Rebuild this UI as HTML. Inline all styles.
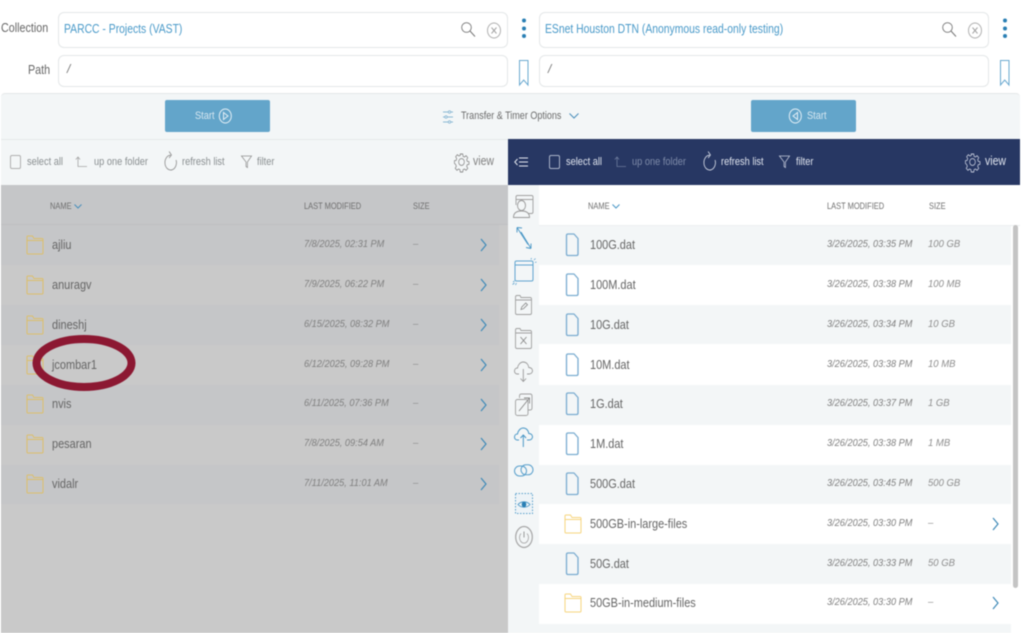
<!DOCTYPE html>
<html><head><meta charset="utf-8">
<style>
html,body{margin:0;padding:0;width:1024px;height:633px;overflow:hidden;background:#fff;font-family:"Liberation Sans","DejaVu Sans",sans-serif;}
#p{position:relative;width:1024px;height:633px;overflow:hidden;filter:blur(.45px);}
.a{position:absolute;white-space:nowrap;line-height:14px;transform-origin:0 0;}
.box{position:absolute;box-sizing:border-box;background:#fff;border:1px solid #e4e7e8;border-radius:6px;}
.lab{color:#666;font-size:12.5px;transform:scaleX(.86);}
.blue{color:#4a9ac9;font-size:12.5px;transform:scaleX(.83);}
.bar{color:#8a8f91;font-size:11px;transform:scaleX(.84);}
.w{color:#dfe4ee;font-size:11px;transform:scaleX(.84);}
.dim{color:#7d8aa8;font-size:11px;transform:scaleX(.84);}
.r{position:absolute;height:40px;}
.n{color:#666;font-size:12.5px;transform:scaleX(.875);}
.d{color:#808080;font-size:10px;font-style:italic;transform:scaleX(.92);}
.s{color:#8e8e8e;font-size:10px;font-style:italic;transform:scaleX(.95);}
.h{color:#6f6f6f;font-size:9px;transform:scaleX(.83);}
.v{font-size:12.5px;transform:scaleX(.84);}
svg{position:absolute;overflow:visible;fill:none;}
.btn{position:absolute;top:100px;width:105px;height:32px;background:#63a5ca;border-radius:2px;}
.st{color:#d5e6f0;font-size:11px;transform:scaleX(.84);}
</style></head><body><div id="p">
<svg width="0" height="0" style="position:absolute">
<defs>
<symbol id="fo" viewBox="0 0 18 20" preserveAspectRatio="none" overflow="visible"><path d="M1 4V2q0-1 1-1h4.500l1.500 2.500h8q1 0 1 1V18q0 1-1 1H2q-1 0-1-1zM1 5.500h16" stroke="currentColor" stroke-width="1" fill="none"/></symbol>
<symbol id="fi" viewBox="0 0 14 24" preserveAspectRatio="none" overflow="visible"><path d="M3 1H9l4 4.500V21q0 1.500-1.500 1.500H3Q1.500 22.500 1.500 21V2.500Q1.500 1 3 1z" stroke="#7aacd0" stroke-width="1.300" stroke-linejoin="round" fill="none"/></symbol>
<symbol id="ch" viewBox="0 0 7 14" preserveAspectRatio="none" overflow="visible"><path d="M1 1l5 6-5 6" stroke="#3f8ab8" stroke-width="1.200" fill="none"/></symbol>
<symbol id="gear" viewBox="0 0 18 18" preserveAspectRatio="none" overflow="visible"><circle cx="9" cy="9" r="3.400" stroke="currentColor" fill="none" stroke-width=".9"/><path d="M7.500 1h3l.4 2.300 1.600.7 2-1.300 2 2-1.300 2 .7 1.600 2.100.4v2.600l-2.100.4-.7 1.600 1.300 2-2 2-2-1.300-1.600.7-.4 2.300h-3l-.4-2.300-1.600-.7-2 1.300-2-2 1.300-2-.7-1.600L.5 10.300V7.700l2.100-.4.7-1.600-1.300-2 2-2 2 1.300 1.600-.7z" stroke="currentColor" stroke-width=".9" fill="none"/></symbol>
<symbol id="ref" viewBox="0 0 14 20" preserveAspectRatio="none" overflow="visible"><path d="M7 4.200A6.200 7.400 0 1 0 13 9" stroke="currentColor" stroke-width=".9" fill="none"/><path d="M5.500 .5L8 4 5.500 7" stroke="currentColor" stroke-width=".9" fill="none"/></symbol>
<symbol id="fil" viewBox="0 0 12 13" preserveAspectRatio="none" overflow="visible"><path d="M.5 1h11L7 7v5.500L5.500 11.500V7z" stroke="currentColor" stroke-width=".8" fill="none"/></symbol>
<symbol id="up" viewBox="0 0 12 12" preserveAspectRatio="none" overflow="visible"><path d="M.8 3.500L3 1l2 2.500M3 1v9.500h9" stroke="currentColor" stroke-width=".8" fill="none"/></symbol>
</defs></svg>

<!-- top labels -->
<div class="a lab" style="left:1px;top:21px;">Collection</div>
<div class="a lab" style="left:28px;top:63px;">Path</div>
<div class="box" style="left:58px;top:12px;width:450px;height:36px;"></div>
<div class="box" style="left:58px;top:55px;width:450px;height:32px;"></div>
<div class="box" style="left:539px;top:12px;width:450px;height:36px;"></div>
<div class="box" style="left:539px;top:55px;width:450px;height:32px;"></div>
<div class="a blue" style="left:64px;top:22px;">PARCC - Projects (VAST)</div>
<div class="a blue" style="left:545px;top:22px;">ESnet Houston DTN (Anonymous read-only testing)</div>
<div class="a" style="left:67px;top:62px;color:#777;font-size:12px;font-style:italic;">/</div>
<div class="a" style="left:548px;top:62px;color:#777;font-size:12px;font-style:italic;">/</div>
<!-- search/clear -->
<svg style="left:461px;top:22px" width="14" height="15"><circle cx="5.500" cy="5.500" r="4.800" stroke="#777" stroke-width=".9"/><path d="M9 9l5 5.500" stroke="#777" stroke-width="1"/></svg>
<svg style="left:942px;top:22px" width="14" height="15"><circle cx="5.500" cy="5.500" r="4.800" stroke="#777" stroke-width=".9"/><path d="M9 9l5 5.500" stroke="#777" stroke-width="1"/></svg>
<svg style="left:487px;top:22px" width="15" height="18"><ellipse cx="7" cy="8.500" rx="6.500" ry="7.500" stroke="#b0b0b0"/><path d="M4.500 5.500l5 6m0-6l-5 6" stroke="#a5a5a5"/></svg>
<svg style="left:968px;top:22px" width="15" height="18"><ellipse cx="7" cy="8.500" rx="6.500" ry="7.500" stroke="#b0b0b0"/><path d="M4.500 5.500l5 6m0-6l-5 6" stroke="#a5a5a5"/></svg>
<!-- kebabs -->
<svg style="left:521px;top:18px" width="6" height="21"><g fill="#2a7fb4"><circle cx="3" cy="2.500" r="2"/><circle cx="3" cy="10.500" r="2"/><circle cx="3" cy="18" r="2"/></g></svg>
<svg style="left:1002px;top:18px" width="6" height="21"><g fill="#2a7fb4"><circle cx="3" cy="2.500" r="2"/><circle cx="3" cy="10.500" r="2"/><circle cx="3" cy="18" r="2"/></g></svg>
<!-- bookmarks -->
<svg style="left:519px;top:60px" width="10" height="26"><path d="M.5.500h8.500V25L4.700 20 .5 25z" stroke="#6aa9d0" stroke-width="1"/></svg>
<svg style="left:1000px;top:60px" width="10" height="26"><path d="M.5.500h8.500V25L4.700 20 .5 25z" stroke="#6aa9d0" stroke-width="1"/></svg>

<!-- transfer bar -->
<div style="position:absolute;left:1px;top:93px;width:1019px;height:46px;background:#f3f6f7;border-top:1px solid #e4e7e8;border-radius:4px 4px 0 0;"></div>
<div class="btn" style="left:165px;"></div>
<div class="btn" style="left:751px;"></div>
<div class="a st" style="left:195px;top:109px;">Start</div>
<svg style="left:219px;top:108px" width="13" height="16"><ellipse cx="6.300" cy="8" rx="6" ry="7" stroke="#e4eff6"/><path d="M4.500 4.500v7l4.500-3.500z" stroke="#e4eff6"/></svg>
<div class="a st" style="left:807px;top:109px;">Start</div>
<svg style="left:789px;top:108px" width="13" height="16"><ellipse cx="6.300" cy="8" rx="6" ry="7" stroke="#e4eff6"/><path d="M8.500 4.500v7L4 8z" stroke="#e4eff6"/></svg>
<svg style="left:443px;top:110px" width="10" height="14"><path d="M0 2h10M0 7h10M0 12h10" stroke="#8ab8d4" stroke-width=".9"/><circle cx="6.500" cy="2" r="1.200" fill="#f3f6f7" stroke="#8ab8d4" stroke-width=".8"/><circle cx="3" cy="7" r="1.200" fill="#f3f6f7" stroke="#8ab8d4" stroke-width=".8"/><circle cx="6.500" cy="12" r="1.200" fill="#f3f6f7" stroke="#8ab8d4" stroke-width=".8"/></svg>
<div class="a" style="left:461px;top:108.500px;color:#6c6c6c;font-size:11px;transform:scaleX(.82);">Transfer &amp; Timer Options</div>
<svg style="left:569px;top:113px" width="10" height="6"><path d="M.5.500L5 5l4.500-4.500" stroke="#4a8fbb" stroke-width="1"/></svg>

<!-- left toolbar -->
<div style="position:absolute;left:1px;top:139px;width:507px;height:46px;background:#f3f6f7;border-top:1px solid #e6e9ea;box-sizing:border-box;"></div>
<div style="position:absolute;left:10px;top:155px;width:11px;height:14px;box-sizing:border-box;border:1px solid #b0b0b0;border-radius:2px;"></div>
<div class="a bar" style="left:27px;top:155px;">select all</div>
<svg style="left:75px;top:156px;color:#a5a5a5" width="12" height="12"><use href="#up" width="12" height="12"/></svg>
<div class="a bar" style="left:94px;top:155px;">up one folder</div>
<svg style="left:164px;top:151px;color:#909090" width="13" height="20"><use href="#ref" width="13" height="20"/></svg>
<div class="a bar" style="left:182px;top:155px;">refresh list</div>
<svg style="left:241px;top:155px;color:#909090" width="11" height="13"><use href="#fil" width="11" height="13"/></svg>
<div class="a bar" style="left:257px;top:155px;">filter</div>
<svg style="left:454px;top:153px;color:#8a8a8a" width="15" height="18"><use href="#gear" width="15" height="18"/></svg>
<div class="a v" style="left:473px;top:154px;color:#808080;">view</div>

<!-- right toolbar -->
<div style="position:absolute;left:508px;top:139px;width:512px;height:46px;background:#273763;"></div>
<svg style="left:514px;top:157px" width="15" height="10"><path d="M3.500 2L.8 5l2.700 3" stroke="#e4e8f0" stroke-width="1"/><path d="M5 1h9M5 5h9M5 9h9" stroke="#e4e8f0" stroke-width="1.100"/></svg>
<div style="position:absolute;left:549px;top:155px;width:11px;height:14px;box-sizing:border-box;border:1px solid #aab3c8;border-radius:2px;"></div>
<div class="a w" style="left:566px;top:155px;">select all</div>
<svg style="left:614px;top:156px;color:#6c7a9c" width="12" height="12"><use href="#up" width="12" height="12"/></svg>
<div class="a dim" style="left:632px;top:155px;">up one folder</div>
<svg style="left:703px;top:151px;color:#d5dae6" width="13" height="20"><use href="#ref" width="13" height="20"/></svg>
<div class="a w" style="left:721px;top:155px;">refresh list</div>
<svg style="left:779px;top:155px;color:#c5cbdc" width="11" height="13"><use href="#fil" width="11" height="13"/></svg>
<div class="a w" style="left:796px;top:155px;">filter</div>
<svg style="left:965px;top:153px;color:#c5cbdc" width="15" height="18"><use href="#gear" width="15" height="18"/></svg>
<div class="a v" style="left:985px;top:154px;color:#dfe4ee;">view</div>

<!-- left pane -->
<div style="position:absolute;left:1px;top:185px;width:507px;height:448px;background:#c9c9c9;"></div>
<div style="position:absolute;left:1px;top:185px;width:507px;height:40px;background:#c5c6c8;border-bottom:1px solid #bfc0c2;box-sizing:border-box;"></div>
<div class="a h" style="left:50px;top:199px;">NAME</div>
<svg style="left:74px;top:204px" width="8" height="5"><path d="M.5.500L4 4 7.500.500" stroke="#4a8fbb"/></svg>
<div class="a h" style="left:304px;top:199px;">LAST MODIFIED</div>
<div class="a h" style="left:413px;top:199px;">SIZE</div>

<div class="r" style="left:1px;top:225px;width:498px;background:#c5c6c8;"></div>
<div class="r" style="left:1px;top:305px;width:498px;background:#c5c6c8;"></div>
<div class="r" style="left:1px;top:385px;width:498px;background:#c5c6c8;"></div>
<div class="r" style="left:1px;top:465px;width:498px;background:#c5c6c8;height:39px;"></div>

<svg style="left:26px;top:235px;color:#dcbf6c" width="18" height="20"><use href="#fo" width="18" height="20"/></svg>
<div class="a n" style="left:52px;top:238px;">ajliu</div><div class="a d" style="left:304px;top:238px;">7/8/2025, 02:31 PM</div><div class="a s" style="left:413px;top:238px;">–</div>
<svg style="left:480px;top:238px" width="7" height="14"><use href="#ch" width="7" height="14"/></svg>

<svg style="left:26px;top:275px;color:#dcbf6c" width="18" height="20"><use href="#fo" width="18" height="20"/></svg>
<div class="a n" style="left:52px;top:278px;">anuragv</div><div class="a d" style="left:304px;top:278px;">7/9/2025, 06:22 PM</div><div class="a s" style="left:413px;top:278px;">–</div>
<svg style="left:480px;top:278px" width="7" height="14"><use href="#ch" width="7" height="14"/></svg>

<svg style="left:26px;top:315px;color:#dcbf6c" width="18" height="20"><use href="#fo" width="18" height="20"/></svg>
<div class="a n" style="left:52px;top:318px;">dineshj</div><div class="a d" style="left:304px;top:318px;">6/15/2025, 08:32 PM</div><div class="a s" style="left:413px;top:318px;">–</div>
<svg style="left:480px;top:318px" width="7" height="14"><use href="#ch" width="7" height="14"/></svg>

<svg style="left:26px;top:355px;color:#dcbf6c" width="18" height="20"><use href="#fo" width="18" height="20"/></svg>
<div class="a n" style="left:52px;top:358px;">jcombar1</div><div class="a d" style="left:304px;top:358px;">6/12/2025, 09:28 PM</div><div class="a s" style="left:413px;top:358px;">–</div>
<svg style="left:480px;top:358px" width="7" height="14"><use href="#ch" width="7" height="14"/></svg>

<svg style="left:26px;top:394px;color:#dcbf6c" width="18" height="20"><use href="#fo" width="18" height="20"/></svg>
<div class="a n" style="left:52px;top:397px;">nvis</div><div class="a d" style="left:304px;top:397px;">6/11/2025, 07:36 PM</div><div class="a s" style="left:413px;top:397px;">–</div>
<svg style="left:480px;top:398px" width="7" height="14"><use href="#ch" width="7" height="14"/></svg>

<svg style="left:26px;top:434px;color:#dcbf6c" width="18" height="20"><use href="#fo" width="18" height="20"/></svg>
<div class="a n" style="left:52px;top:437px;">pesaran</div><div class="a d" style="left:304px;top:437px;">7/8/2025, 09:54 AM</div><div class="a s" style="left:413px;top:437px;">–</div>
<svg style="left:480px;top:437px" width="7" height="14"><use href="#ch" width="7" height="14"/></svg>

<svg style="left:26px;top:474px;color:#dcbf6c" width="18" height="20"><use href="#fo" width="18" height="20"/></svg>
<div class="a n" style="left:52px;top:477px;">vidalr</div><div class="a d" style="left:304px;top:477px;">7/11/2025, 11:01 AM</div><div class="a s" style="left:413px;top:477px;">–</div>
<svg style="left:480px;top:477px" width="7" height="14"><use href="#ch" width="7" height="14"/></svg>

<!-- ellipse annotation -->
<svg style="left:30px;top:332px" width="108" height="60"><ellipse cx="54" cy="31" rx="47.500" ry="24" stroke="#8c1832" stroke-width="8"/></svg>

<!-- sidebar -->
<div style="position:absolute;left:508px;top:185px;width:31px;height:448px;background:#f3f6f7;"></div>
<svg style="left:512px;top:194px" width="22" height="24"><path d="M4 11V3q0-1.500 1.500-1.500h14q1.500 0 1.500 1.500v15q0 1.500-1.500 1.500H16M4 5.500h17" stroke="#a0a0a0" stroke-width=".9"/><ellipse cx="9.500" cy="11.500" rx="4" ry="5" stroke="#999" stroke-width=".9" fill="#f3f6f7"/><path d="M1.500 23.500c0-4.500 3-6.500 8-6.500s8 2 8 6.500z" stroke="#999" stroke-width=".9" fill="#f3f6f7"/></svg>
<svg style="left:516px;top:226px" width="16" height="25"><path d="M1 1.500l11 17M1 1.500v5M1 1.500l5 .5M5 6l10 16.500M15 22.500v-5M15 22.500l-5-1" stroke="#4a97c6" stroke-width=".9"/></svg>
<svg style="left:512px;top:258px" width="23" height="27"><rect x="3" y="3" width="18" height="20" rx="1.500" stroke="#5fa4cf" stroke-width="1"/><path d="M3 7h18" stroke="#5fa4cf" stroke-width="1"/><path d="M22 2l1.500-1.500M19 1.500l.5-1.500M23 4.500l1.500-.5M1 24l1.500-1M.5 26.500l2-1.500M3.500 27l1-2" stroke="#5fa4cf" stroke-width=".8"/></svg>
<svg style="left:515px;top:295px" width="17" height="20"><path d="M.5 3V2q0-1.500 1.500-1.500h3l1 2h9q1.500 0 1.500 1.500v14q0 1.500-1.500 1.500H2Q.5 19.500.5 18zM.5 5h16" stroke="#a0a0a0" stroke-width=".9"/><path d="M6 14.500l.8-2.500 4-4 1.700 1.700-4 4z" stroke="#888" stroke-width=".8"/></svg>
<svg style="left:515px;top:328px" width="17" height="21"><path d="M.5 3V2q0-1.500 1.500-1.500h3l1 2h9q1.500 0 1.500 1.500v15q0 1.500-1.500 1.500H2Q.5 20.500.5 19zM.5 5h16" stroke="#a0a0a0" stroke-width=".9"/><path d="M5.500 9l6 7m0-7l-6 7" stroke="#888" stroke-width=".9"/></svg>
<svg style="left:514px;top:360px" width="19" height="22"><path d="M5 14H3.500C1.500 14 .5 12.500.5 11c0-1.800 1.300-3 3-3 .3-3 2.800-6 5.800-6 3 0 5.200 2.500 5.500 5.500 2 0 3.700 1.300 3.700 3.300 0 1.800-1.500 3.200-3.500 3.200H13" stroke="#999" stroke-width=".9"/><path d="M9.300 9v12M6.500 18.500l2.800 3 2.800-3" stroke="#999" stroke-width=".9"/></svg>
<svg style="left:515px;top:393px" width="18" height="24"><path d="M4.500 5V3q0-2 2-2h8.500q2 0 2 2v12q0 2-2 2h-2" stroke="#a0a0a0" stroke-width=".9"/><rect x=".5" y="6.500" width="12.500" height="16" rx="2" stroke="#a0a0a0" stroke-width=".9"/><path d="M4 18L14.500 5M9 5h5.500v5.500" stroke="#888" stroke-width=".9"/></svg>
<svg style="left:514px;top:426px" width="19" height="22"><path d="M5 14H3.500C1.500 14 .5 12.500.5 11c0-1.800 1.300-3 3-3 .3-3 2.800-6 5.800-6 3 0 5.200 2.500 5.500 5.500 2 0 3.700 1.300 3.700 3.300 0 1.800-1.500 3.200-3.500 3.200H13" stroke="#4a97c6" stroke-width="1"/><path d="M9.300 21V9M6.500 12l2.800-3 2.800 3" stroke="#4a97c6" stroke-width="1"/></svg>
<svg style="left:514px;top:464px" width="20" height="13"><rect x=".5" y="2" width="12" height="10" rx="5" stroke="#5aa0cc"/><rect x="7" y=".8" width="12" height="10" rx="5" stroke="#5aa0cc"/></svg>
<svg style="left:515px;top:493px" width="18" height="21"><rect x=".5" y=".5" width="17" height="20" stroke="#5aa0cc" stroke-dasharray="1.500 1.500" fill="#edf3f7"/><path d="M3 11.500C6 8 12 8 15 11.500 12 15 6 15 3 11.500z" stroke="#4a97c6" stroke-width=".9"/><ellipse cx="9" cy="11.500" rx="2.300" ry="2.800" fill="#2a7fb4"/></svg>
<svg style="left:515px;top:526px" width="18" height="22"><ellipse cx="9" cy="11" rx="8.300" ry="10.500" stroke="#a5a5a5" stroke-width="1.200"/><path d="M6 7.500a4.500 5.500 0 1 0 6 0" stroke="#aaa" stroke-width=".9"/><path d="M9 5.500v6" stroke="#999" stroke-width="1"/></svg>

<!-- right pane -->
<div style="position:absolute;left:539px;top:185px;width:481px;height:448px;background:#fff;"></div>
<div style="position:absolute;left:539px;top:225px;width:481px;height:1px;background:#eceff0;"></div>
<div class="a h" style="left:588px;top:199px;">NAME</div>
<svg style="left:612px;top:204px" width="8" height="5"><path d="M.5.500L4 4 7.500.500" stroke="#4a97c6"/></svg>
<div class="a h" style="left:827px;top:199px;">LAST MODIFIED</div>
<div class="a h" style="left:929px;top:199px;">SIZE</div>

<div class="r" style="left:539px;top:226px;width:472px;height:39px;background:#f3f6f7;"></div>
<div class="r" style="left:539px;top:305px;width:472px;height:39px;background:#f3f6f7;"></div>
<div class="r" style="left:539px;top:385px;width:472px;background:#f3f6f7;"></div>
<div class="r" style="left:539px;top:465px;width:472px;height:39px;background:#f3f6f7;"></div>
<div class="r" style="left:539px;top:544px;width:472px;background:#f3f6f7;"></div>
<div class="r" style="left:539px;top:624px;width:472px;height:9px;background:#f3f6f7;"></div>
<div style="position:absolute;left:1013px;top:225px;width:5px;height:363px;background:#c4c4c4;border-radius:3px;"></div>

<svg style="left:565px;top:233px" width="14" height="24"><use href="#fi" width="14" height="24"/></svg>
<div class="a n" style="left:590px;top:238px;">100G.dat</div><div class="a d" style="left:827px;top:238px;">3/26/2025, 03:35 PM</div><div class="a s" style="left:928px;top:238px;">100 GB</div>
<svg style="left:565px;top:273px" width="14" height="24"><use href="#fi" width="14" height="24"/></svg>
<div class="a n" style="left:590px;top:278px;">100M.dat</div><div class="a d" style="left:827px;top:278px;">3/26/2025, 03:38 PM</div><div class="a s" style="left:928px;top:278px;">100 MB</div>
<svg style="left:565px;top:313px" width="14" height="24"><use href="#fi" width="14" height="24"/></svg>
<div class="a n" style="left:590px;top:318px;">10G.dat</div><div class="a d" style="left:827px;top:318px;">3/26/2025, 03:34 PM</div><div class="a s" style="left:928px;top:318px;">10 GB</div>
<svg style="left:565px;top:353px" width="14" height="24"><use href="#fi" width="14" height="24"/></svg>
<div class="a n" style="left:590px;top:358px;">10M.dat</div><div class="a d" style="left:827px;top:358px;">3/26/2025, 03:38 PM</div><div class="a s" style="left:928px;top:358px;">10 MB</div>
<svg style="left:565px;top:392px" width="14" height="24"><use href="#fi" width="14" height="24"/></svg>
<div class="a n" style="left:590px;top:397px;">1G.dat</div><div class="a d" style="left:827px;top:397px;">3/26/2025, 03:37 PM</div><div class="a s" style="left:928px;top:397px;">1 GB</div>
<svg style="left:565px;top:432px" width="14" height="24"><use href="#fi" width="14" height="24"/></svg>
<div class="a n" style="left:590px;top:437px;">1M.dat</div><div class="a d" style="left:827px;top:437px;">3/26/2025, 03:38 PM</div><div class="a s" style="left:928px;top:437px;">1 MB</div>
<svg style="left:565px;top:472px" width="14" height="24"><use href="#fi" width="14" height="24"/></svg>
<div class="a n" style="left:590px;top:477px;">500G.dat</div><div class="a d" style="left:827px;top:477px;">3/26/2025, 03:45 PM</div><div class="a s" style="left:928px;top:477px;">500 GB</div>
<svg style="left:564px;top:514px;color:#f6d57e" width="18" height="20"><use href="#fo" width="18" height="20"/></svg>
<div class="a n" style="left:590px;top:517px;">500GB-in-large-files</div><div class="a d" style="left:827px;top:517px;">3/26/2025, 03:30 PM</div><div class="a s" style="left:928px;top:517px;">–</div>
<svg style="left:992px;top:517px" width="7" height="14"><use href="#ch" width="7" height="14"/></svg>
<svg style="left:565px;top:552px" width="14" height="24"><use href="#fi" width="14" height="24"/></svg>
<div class="a n" style="left:590px;top:557px;">50G.dat</div><div class="a d" style="left:827px;top:557px;">3/26/2025, 03:33 PM</div><div class="a s" style="left:928px;top:557px;">50 GB</div>
<svg style="left:564px;top:593px;color:#f6d57e" width="18" height="20"><use href="#fo" width="18" height="20"/></svg>
<div class="a n" style="left:590px;top:596px;">50GB-in-medium-files</div><div class="a d" style="left:827px;top:596px;">3/26/2025, 03:30 PM</div><div class="a s" style="left:928px;top:596px;">–</div>
<svg style="left:992px;top:596px" width="7" height="14"><use href="#ch" width="7" height="14"/></svg>
</div></body></html>
